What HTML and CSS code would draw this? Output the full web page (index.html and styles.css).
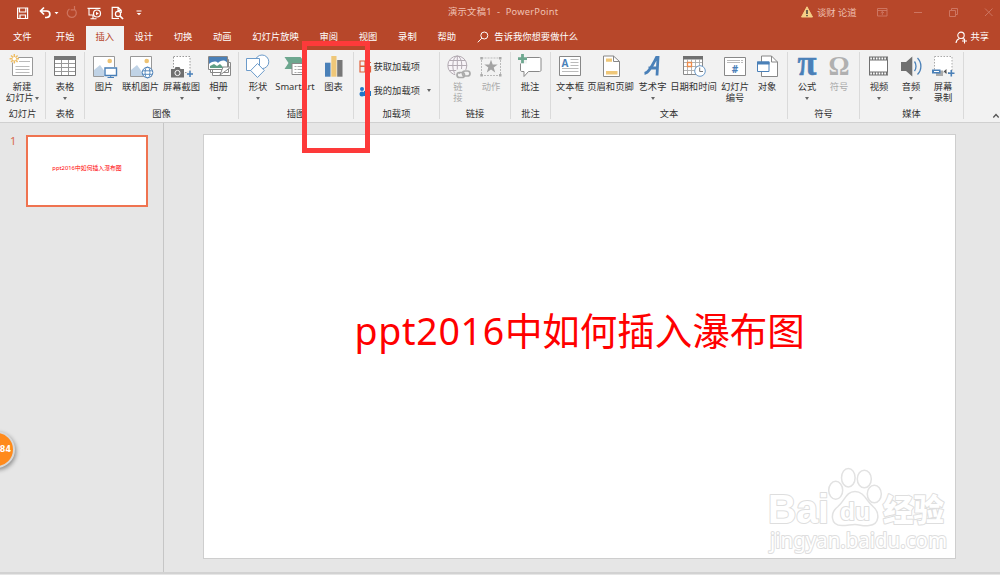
FILE: index.html
```html
<!DOCTYPE html>
<html lang="zh-CN">
<head>
    <meta charset="UTF-8">
    <meta name="viewport" content="width=device-width, initial-scale=1.0">
    <title>演示文稿1 - PowerPoint</title>
    <link rel="stylesheet" href="styles.css">
</head>
<body>
    <div class="app">
        <header class="titlebar">
            <div class="quick">
                <svg width="130" height="16" viewBox="0 0 130 16" fill="none" stroke="#fff" stroke-width="1.2">
                    <!-- save -->
                    <path d="M1.6 3h10v10.5h-10zM3.5 3v4h6.3V3M4 13.500V10h5.500v3.500"/>
                    <!-- undo -->
                    <path d="M28 2.500 24.500 6l3.500 3.500M25 6h5.500c4.500 0 4.500 6.500 0 6.500h-1.500" stroke-width="1.7"/>
                    <path d="M38.500 7h4l-2 2.300z" fill="#fff" stroke="none"/>
                    <!-- redo -->
                    <g stroke="#cf7560"><path d="M58.500 4.300a4.500 4.500 0 1 1-5-.3M58.500 1v3.800h-3.800"/></g>
                    <!-- slide show -->
                    <path d="M71.500 3.400h13M73 3.500v6.500h4.500M77 10v3.500M74.500 13.700h6" stroke-width="1.1"/>
                    <circle cx="81" cy="8.500" r="3.500"/><path d="M80 6.800v3.400l2.800-1.700z" fill="#fff" stroke="none"/>
                    <!-- preview -->
                    <path d="M103 13.500h-6.800V2.300h6l3 3V8M102 2.300v3h3"/>
                    <circle cx="102" cy="9" r="2.600"/><path d="m104 11 3 3" stroke-width="1.700"/>
                    <path d="M120.500 6h5" stroke-width="1"/><path d="M120.800 8h4.400l-2.200 2.300z" fill="#fff" stroke="none"/>
                </svg>
            </div>
            <div class="doc-title">演示文稿1&nbsp; - &nbsp;PowerPoint</div>
            <div class="account">
                <svg width="12" height="12" viewBox="0 0 12 12"><path d="M6 .8 11.500 11H.5z" fill="#f5cf86" stroke="#f5cf86" stroke-linejoin="round"/><path d="M6 4v4M6 9v1.300" stroke="#333" stroke-width="1.400"/></svg>
                <span>谈财 论道</span>
            </div>
            <div class="window-btns">
                <svg width="120" height="12" viewBox="0 0 120 12" fill="none" stroke="#cd7561">
                    <path d="M.5 2.500h9.500v7.500H.5zM.5 4.500h9.500M5.300 9V5.500M3.700 7l1.600-1.500L7 7"/>
                    <path d="M37 6.500h8"/>
                    <path d="M72.500 4.500h6v6h-6zM74.500 4.500v-2h6v6h-2"/>
                    <path d="m108 2.500 7.500 7.500M115.500 2.500 108 10"/>
                </svg>
            </div>
        </header>

        <nav class="tabs">
            <span class="tab file">文件</span>
            <span class="tab">开始</span>
            <span class="tab active">插入</span>
            <span class="tab">设计</span>
            <span class="tab">切换</span>
            <span class="tab">动画</span>
            <span class="tab">幻灯片放映</span>
            <span class="tab">审阅</span>
            <span class="tab">视图</span>
            <span class="tab">录制</span>
            <span class="tab">帮助</span>
            <span class="tell-me">
                <svg width="12" height="12" viewBox="0 0 12 12" fill="none" stroke="#fff"><circle cx="7.300" cy="4.500" r="3.500"/><path d="M4.800 7.200.8 11.300"/></svg>
                告诉我你想要做什么
            </span>
            <span class="share">
                <svg width="13" height="13" viewBox="0 0 13 13" fill="none" stroke="#fff" stroke-width="1.100"><circle cx="6" cy="4.300" r="3.200"/><path d="M1 12c.3-2.500 1.700-4 3.500-4.600M7.500 7.300l1.300.9M9.500 7.500v5M7 10h5"/></svg>
                共享
            </span>
        </nav>

        <section class="ribbon">
            <div class="group g-slide">
                <div class="tools">
                    <div class="tool w44">
                        <svg class="icon" viewBox="0 0 26 24" fill="none">
                            <path d="M3.500 3.500h20v18h-20z" fill="#fff" stroke="#999"/>
                            <path d="M10 7.500h11M6.500 12.500h14M6.500 15.500h14M6.500 18.500h14" stroke="#bbb"/>
                            <circle cx="5.300" cy="4.700" r="4.200" fill="#f2f2f2"/>
                            <path d="M5.300 0v9.400M.6 4.700H10M2 1.400l6.600 6.600M8.600 1.400 2 8" stroke="#efbd62" stroke-width="1.400"/>
                            <circle cx="5.300" cy="4.700" r="1.800" fill="#fff"/>
                        </svg>
                        <span>新建<br>幻灯片 <i class="caret inline"></i></span>
                    </div>
                </div>
                <div class="group-name">幻灯片</div>
            </div>

            <div class="group g-table">
                <div class="tools">
                    <div class="tool w38">
                        <svg class="icon" viewBox="0 0 26 24" fill="none">
                            <path d="M2.500 2.500h21v19h-21z" fill="#fff" stroke="#777"/>
                            <path d="M2 2h22v4H2z" fill="#777"/>
                            <path d="M3 9.500h20M3 13.500h20M3 17.500h20M9.500 6v15M16.500 6v15" stroke="#999"/>
                        </svg>
                        <span>表格</span><i class="caret"></i>
                    </div>
                </div>
                <div class="group-name">表格</div>
            </div>

            <div class="group g-image">
                <div class="tools">
                    <div class="tool w34">
                        <svg class="icon" viewBox="0 0 26 24" fill="none">
                            <path d="M2.500 2.500h21v20h-21z" fill="#fff" stroke="#999"/>
                            <path d="M3 22v-6l6-5 8 11z" fill="#c0d3e6"/>
                            <circle cx="18.700" cy="7" r="2.300" fill="#eec374"/>
                            <path d="M13 13h13v11H13z" fill="#f2f2f2"/>
                            <path d="M14 14h11.500v7.500H14z" fill="#fff" stroke="#4a80b8" stroke-width="1.400"/>
                            <path d="M19.700 21.500v2M16.500 23.500h6.500" stroke="#4a80b8"/>
                        </svg>
                        <span>图片</span>
                    </div>
                    <div class="tool w39">
                        <svg class="icon" viewBox="0 0 26 24" fill="none">
                            <path d="M2.500 2.500h21v20h-21z" fill="#fff" stroke="#999"/>
                            <path d="M3 22v-6l6-5 8 11z" fill="#c0d3e6"/>
                            <circle cx="18.700" cy="7" r="2.300" fill="#eec374"/>
                            <circle cx="19.500" cy="18.500" r="5.300" fill="#fff" stroke="#4a80b8"/>
                            <ellipse cx="19.500" cy="18.500" rx="2.400" ry="5.300" stroke="#4a80b8" stroke-width=".9"/>
                            <path d="M14.500 16.800h10M14.500 20.300h10" stroke="#4a80b8" stroke-width=".9"/>
                        </svg>
                        <span>联机图片</span>
                    </div>
                    <div class="tool w43">
                        <svg class="icon" viewBox="0 0 26 24" fill="none">
                            <path d="M4.500 2.500h16.500v16H4.500z" fill="#fff" stroke="#999" stroke-dasharray="1.500 1.500"/>
                            <path d="M2 15h3.500l1-2h4l1 2H15v8.500H2z" fill="#707070"/>
                            <circle cx="8.500" cy="19" r="2.600" fill="#707070" stroke="#fff"/>
                            <path d="M18 17h6v6h-6z" fill="#f2f2f2"/>
                            <path d="M21 17v6M18 20h6" stroke="#4a80b8" stroke-width="1.500"/>
                        </svg>
                        <span>屏幕截图</span><i class="caret"></i>
                    </div>
                    <div class="tool w31">
                        <svg class="icon" viewBox="0 0 26 24" fill="none">
                            <path d="M6.500 8.500h18v13h-18zM4.500 5.500h18v13h-18z" fill="#fff" stroke="#888"/>
                            <path d="M2.500 2.500h19v13h-19z" fill="#fff" stroke="#888"/>
                            <path d="M3 3h18v5.500c-3-3.500-7-1.500-9 .5-2-2-5-2-9 1z" fill="#4a80b8"/>
                            <path d="M4 14v-2l4-2 3 2 3-2 4 4z" fill="#5f9e86"/>
                            <path d="m14 21 3-8h8z" fill="#fff" stroke="#888"/>
                        </svg>
                        <span>相册</span><i class="caret"></i>
                    </div>
                </div>
                <div class="group-name">图像</div>
            </div>

            <div class="group g-illus">
                <div class="tools">
                    <div class="tool w28">
                        <svg class="icon" viewBox="0 0 26 24" fill="#fff" stroke="#6c9bca">
                            <circle cx="17" cy="7.800" r="6.800"/>
                            <path d="M1.500 4.500h13v12h-13z"/>
                            <path d="m12.500 9.500 6.800 7-6.800 7-6.800-7z"/>
                        </svg>
                        <span>形状</span><i class="caret"></i>
                    </div>
                    <div class="tool w46">
                        <svg class="icon" viewBox="0 0 26 24" fill="none">
                            <path d="M2.500 3h16l5 6-5 6h-16l4-6z" fill="#6da78f"/>
                            <path d="M10 9.500h14v11H10z" fill="#fff" stroke="#888"/>
                            <path d="M12.500 12.500h2m1 0h8M12.500 15.500h2m1 0h8M12.500 18.500h2m1 0h8" stroke="#aaa"/>
                        </svg>
                        <span>SmartArt</span>
                    </div>
                    <div class="tool w31">
                        <svg class="icon" viewBox="0 0 26 24">
                            <path d="M4 8.700h5.500v14H4z" fill="#4a80b8"/>
                            <path d="M10.300 2h5.200v20.700h-5.200z" fill="#efc778"/>
                            <path d="M16.200 6h5.300v16.700h-5.300z" fill="#777"/>
                        </svg>
                        <span>图表</span>
                    </div>
                </div>
                <div class="group-name">插图</div>
            </div>

            <div class="group g-addins">
                <div class="addins">
                    <div class="addin">
                        <svg width="13" height="13" viewBox="0 0 13 13" fill="none" stroke="#e0603a" stroke-width="1.200"><path d="M1 1h5v5H1zM1 6.500h5V12H1zM6 6.500h5.500V12H6zM9.500 0v5M7 2.500h5"/></svg>
                        获取加载项
                    </div>
                    <div class="addin">
                        <svg width="13" height="13" viewBox="0 0 13 13" fill="#1f76c8"><circle cx="8.500" cy="3.500" r="2.500"/><circle cx="3" cy="5" r="2"/><path d="M5 7h7v5H5z"/><circle cx="3" cy="10" r="2.500"/></svg>
                        我的加载项 <i class="caret"></i>
                    </div>
                </div>
                <div class="group-name">加载项</div>
            </div>

            <div class="group g-links">
                <div class="tools">
                    <div class="tool w32 disabled">
                        <svg class="icon" viewBox="0 0 26 24" fill="none" stroke="#b3abb3">
                            <circle cx="12.300" cy="11.500" r="9.500" fill="#f8f4f8"/>
                            <ellipse cx="12.300" cy="11.500" rx="4.500" ry="9.500"/>
                            <path d="M12.300 2v19M3 11.500h19M4.500 6.500h16M4.500 16.500h16"/>
                            <g stroke="#f2f2f2" stroke-width="4"><rect x="12" y="17" width="7" height="5" rx="2.500"/><rect x="18" y="18" width="7" height="5" rx="2.500"/></g>
                            <g stroke="#aaa" stroke-width="1.700"><rect x="12" y="18.500" width="7.500" height="5" rx="2.500"/><rect x="17.500" y="17" width="7.500" height="5" rx="2.500"/></g>
                        </svg>
                        <span>链<br>接</span>
                    </div>
                    <div class="tool w34 disabled">
                        <svg class="icon" viewBox="0 0 26 24" fill="none">
                            <path d="M3.500 4h19v17.500h-19z" stroke="#bbb" stroke-dasharray="2 1"/>
                            <path d="M2.300 3h2.500v2.500H2.300zM21 3h2.500v2.500H21zM2.300 20h2.500v2.500H2.300zM21 20h2.500v2.500H21z" fill="#aaa"/>
                            <path d="m13 5.800 1.700 4.800h5l-4 3 1.500 4.900-4.200-3-4.200 3 1.500-4.900-4-3h5z" fill="#a3a3a3"/>
                        </svg>
                        <span>动作</span>
                    </div>
                </div>
                <div class="group-name">链接</div>
            </div>

            <div class="group g-comment">
                <div class="tools">
                    <div class="tool w38">
                        <svg class="icon" viewBox="0 0 26 24" fill="none">
                            <path d="M5.500 3.500h17c1 0 1.500.5 1.500 1.500v11c0 1-.5 1.500-1.500 1.500h-11l-4.500 5v-5H5c-1 0-1.500-.5-1.500-1.500V5c0-1 .5-1.500 2-1.500z" fill="#fff" stroke="#888"/>
                            <path d="M0 0h10v9.500H0z" fill="#f2f2f2"/>
                            <path d="M5.500 0v9.200M1 4.600h9" stroke="#6da78f" stroke-width="2.800"/>
                        </svg>
                        <span>批注</span>
                    </div>
                </div>
                <div class="group-name">批注</div>
            </div>

            <div class="group g-text">
                <div class="tools">
                    <div class="tool w31">
                        <svg class="icon" viewBox="0 0 26 24" fill="none">
                            <path d="M2.500 2.500h21v19h-21z" fill="#fff" stroke="#888"/>
                            <text x="4.500" y="12.500" class="glyph-a">A</text>
                            <path d="M13.500 5.500h8M13.500 8.500h8M13.500 11.500h8M5 14.500h16.500M5 17.500h16.500" stroke="#bbb"/>
                        </svg>
                        <span>文本框</span><i class="caret"></i>
                    </div>
                    <div class="tool w50">
                        <svg class="icon" viewBox="0 0 26 24" fill="none">
                            <path d="M5.500 2h10l6 5.500v15h-16z" fill="#fff" stroke="#888"/>
                            <path d="M15.500 2v5.500h6" stroke="#888"/>
                            <path d="M8 4.500h6v3.300H8zM8 17h11.500v3.500H8z" fill="#efc778"/>
                        </svg>
                        <span>页眉和页脚</span>
                    </div>
                    <div class="tool w34">
                        <svg class="icon" viewBox="0 0 26 24" fill="none">
                            <path d="M4.500 19.500C9 19 13 10 16.500 3.500h1.500l-1 18M8.500 14H18" stroke="#4a80b8" stroke-width="2.800"/>
                        </svg>
                        <span>艺术字</span><i class="caret"></i>
                    </div>
                    <div class="tool w48">
                        <svg class="icon" viewBox="0 0 26 24" fill="none">
                            <path d="M2.500 2.500h19v18h-19z" fill="#fff" stroke="#888"/>
                            <path d="M2 2h20v3.500H2z" fill="#707070"/>
                            <path d="M3 8.500h18M3 12.500h18M3 16.500h18M6.500 5v15M10.500 5v15M14.500 5v15M18.500 5v15" stroke="#aaa" stroke-width=".9"/>
                            <path d="M6.500 8.500h4v4h-4z" stroke="#ed8b4a" stroke-width="1.300" fill="#fff"/>
                            <circle cx="19" cy="17" r="5.300" fill="#fff" stroke="#6c9bca"/>
                            <path d="M18.700 13.500v4H22" stroke="#777"/>
                        </svg>
                        <span>日期和时间</span>
                    </div>
                    <div class="tool w35">
                        <svg class="icon" viewBox="0 0 26 24" fill="none">
                            <path d="M2.500 3.500h21v18h-21z" fill="#fff" stroke="#888"/>
                            <path d="M5 6.500h16M5 8.500h16" stroke="#bbb" stroke-dasharray="13 1"/>
                            <text x="13" y="19" class="glyph-hash">#</text>
                        </svg>
                        <span>幻灯片<br>编号</span>
                    </div>
                    <div class="tool w29">
                        <svg class="icon" viewBox="0 0 26 24" fill="none">
                            <path d="M7.500 2h10l6 6v14.500h-16z" fill="#fff" stroke="#888"/>
                            <path d="M17.500 2v6h6" stroke="#888"/>
                            <path d="M3.500 8h11.500v9.500H3.500z" fill="#fff" stroke="#4a80b8"/>
                            <path d="M3 7.500h12.500v3H3z" fill="#4a80b8"/>
                        </svg>
                        <span>对象</span>
                    </div>
                </div>
                <div class="group-name">文本</div>
            </div>

            <div class="group g-symbol">
                <div class="tools">
                    <div class="tool w32">
                        <svg class="icon" viewBox="0 0 26 24"><text x="13" y="21" class="glyph-pi" textLength="19" lengthAdjust="spacingAndGlyphs">π</text></svg>
                        <span>公式</span><i class="caret"></i>
                    </div>
                    <div class="tool w32 disabled">
                        <svg class="icon" viewBox="0 0 26 24"><text x="13" y="21" class="glyph-omega" textLength="21" lengthAdjust="spacingAndGlyphs">Ω</text></svg>
                        <span>符号</span>
                    </div>
                </div>
                <div class="group-name">符号</div>
            </div>

            <div class="group g-media">
                <div class="tools">
                    <div class="tool w32">
                        <svg class="icon" viewBox="0 0 26 24" fill="none">
                            <path d="M3 2.500h19v19H3z" fill="#707070"/>
                            <path d="M4 6.500h17v11H4z" fill="#fff"/>
                            <path d="M4.300 4.500h17M4.300 19.500h17" stroke="#fff" stroke-width="1.800" stroke-dasharray="1.600 1.200"/>
                        </svg>
                        <span>视频</span><i class="caret"></i>
                    </div>
                    <div class="tool w32">
                        <svg class="icon" viewBox="0 0 26 24" fill="none">
                            <path d="M3 8h5L14.300 2.500v20L8 17H3z" fill="#707070"/>
                            <path d="M16.500 7.500c2 2.500 2 7 0 9.500M19.500 4c4.500 4.500 4.500 12 0 16.500" stroke="#4a80b8" stroke-width="1.300"/>
                        </svg>
                        <span>音频</span><i class="caret"></i>
                    </div>
                    <div class="tool w32">
                        <svg class="icon" viewBox="0 0 26 24" fill="none">
                            <path d="M4.500 2.500h17.500v16H4.500z" fill="#fff" stroke="#aaa" stroke-dasharray="1.500 1.500"/>
                            <path d="M6 16.500h7v5.500H6z" fill="#aaa"/>
                            <path d="M2 15.500h8.500v4H2z" fill="#4a80b8"/><path d="M4 17.500h5" stroke="#fff"/>
                            <path d="m16.500 15v5l-3-2.500z" fill="#555"/>
                            <path d="M21.300 16v6.500M18 19.300h6.500" stroke="#4a80b8" stroke-width="1.600"/>
                        </svg>
                        <span>屏幕<br>录制</span>
                    </div>
                </div>
                <div class="group-name">媒体</div>
            </div>
            <svg class="collapse" width="8" height="6" viewBox="0 0 8 6" fill="none" stroke="#555" stroke-width="1.300"><path d="m1.300 4.500 2.700-3 2.700 3"/></svg>
        </section>

        <main class="workspace">
            <aside class="thumbs">
                <span class="num">1</span>
                <div class="thumb">ppt2016中如何插入瀑布图</div>
            </aside>
            <div class="stage">
                <div class="slide">
                    <h1><span>ppt2016</span>中如何插入瀑布图</h1>
                    <svg class="watermark" width="190" height="92" viewBox="0 0 190 92">
                        <g fill="#fff" stroke="#e2e2e2" stroke-width="1.500">
                            <ellipse cx="72.700" cy="24.300" rx="7" ry="9"/>
                            <ellipse cx="85.300" cy="11.700" rx="6.800" ry="9.300"/>
                            <ellipse cx="101.300" cy="13" rx="7" ry="8.800"/>
                            <ellipse cx="111.300" cy="28" rx="7" ry="8.800"/>
                            <path d="M92 25.500c-9 0-10 9-17 15-8 6-8 19 4 19 6 0 8-1 13-1s8 2 14 1c11-1 11-13 4-19-7-6-9-15-18-15z"/>
                        </g>
                        <text class="wm wm-bai" x="5" y="57" textLength="61" lengthAdjust="spacingAndGlyphs">Bai</text>
                        <text class="wm wm-du" x="77" y="53.500" textLength="30" lengthAdjust="spacingAndGlyphs">du</text>
                        <text class="wm wm-cn" x="120" y="55" textLength="61" lengthAdjust="spacingAndGlyphs">经验</text>
                        <text class="wm wm-url" x="7" y="82" textLength="177" lengthAdjust="spacingAndGlyphs">jingyan.baidu.com</text>
                    </svg>
                </div>
            </div>
        </main>
        <div class="statusbar"></div>

        <div class="badge">84</div>
        <div class="highlight"></div>
    </div>
</body>
</html>
```
FILE: styles.css
```css
body {
    margin: 0;
    font-family: "Noto Sans", "Noto Sans CJK SC", sans-serif;
    font-size: 9.3px;
    color: #333;
    background-color: #e6e6e6;
}
.app {
    position: relative;
    width: 1000px;
    height: 575px;
    overflow: hidden;
    display: flex;
    flex-direction: column;
}
svg {
    display: block;
    flex: none;
}

/* title bar */
.titlebar {
    display: flex;
    align-items: center;
    height: 26px;
    background-color: #b7472a;
    color: #f0c1b3;
}
.quick {
    width: 432px;
    padding-left: 16px;
}
.doc-title {
    width: 353px;
    height: 26px;
    line-height: 24px;
    letter-spacing: 0.250px;
    white-space: nowrap;
}
.account {
    display: flex;
    align-items: center;
    gap: 4px;
    width: 76px;
    height: 24px;
    align-self: flex-start;
    white-space: nowrap;
}
.window-btns {
    height: 14px;
}

/* tabs */
.tabs {
    display: flex;
    height: 24px;
    line-height: 22px;
    background-color: #b7472a;
    color: #fff;
    white-space: nowrap;
}
.tab {
    padding: 0 10.35px;
}
.tab.file {
    margin: 0 3.500px 0 2.700px;
}
.tab.active {
    margin-left: 1.300px;
    padding: 0 10.100px 0 9.300px;
    background-color: #f2f2f2;
    color: #b7472a;
}
.tell-me {
    display: flex;
    align-items: center;
    gap: 5px;
    height: 22px;
    margin-left: 11px;
}
.share {
    display: flex;
    align-items: center;
    gap: 2px;
    height: 22px;
    margin: 0 11px 0 auto;
}

/* ribbon */
.ribbon {
    display: flex;
    height: 72px;
    background-color: #f2f2f2;
    border-bottom: 1px solid #d0d0d0;
}
.group {
    box-sizing: border-box;
    display: flex;
    flex-direction: column;
    justify-content: space-between;
    height: 67px;
    margin-top: 2px;
    border-right: 1px solid #dadada;
}
.g-slide { width: 46px; }
.g-table { width: 39px; }
.g-image { width: 154px; }
.g-illus { width: 115px; }
.g-addins { width: 86px; }
.g-links { width: 71px; }
.g-comment { width: 40px; }
.g-text { width: 237px; }
.g-symbol { width: 72px; }
.g-media { width: 104px; }

.tools {
    display: flex;
    padding-top: 2px;
}
.g-image .tools { padding-left: 2px; }
.g-illus .tools { padding-left: 5px; }
.g-links .tools { padding-left: 2px; }
.g-text .tools { padding-left: 3.500px; }
.g-symbol .tools,
.g-media .tools { padding-left: 3px; }

.tool {
    display: flex;
    flex-direction: column;
    align-items: center;
    flex: none;
    line-height: 11.500px;
    text-align: center;
    white-space: nowrap;
}
.tool.disabled {
    color: #ababab;
}
.icon {
    width: 26px;
    height: 24px;
    margin-bottom: 2.500px;
    overflow: visible;
}
.w28 { width: 28px; }
.w29 { width: 29px; }
.w31 { width: 31px; }
.w32 { width: 32px; }
.w34 { width: 34px; }
.w35 { width: 35px; }
.w38 { width: 38px; }
.w39 { width: 39px; }
.w43 { width: 43px; }
.w44 { width: 44px; }
.w46 { width: 46px; }
.w48 { width: 48px; }
.w50 { width: 50px; }

.caret {
    width: 0;
    height: 0;
    margin-top: 4.500px;
    border: 2.500px solid transparent;
    border-width: 3px 2.500px 0;
    border-top-color: #666;
}
.caret.inline {
    display: inline-block;
    margin: 0 -1px 0 -1px;
    vertical-align: 1px;
}
.group-name {
    height: 11px;
    line-height: 11px;
    text-align: center;
}
.addins {
    display: flex;
    flex-direction: column;
    padding: 2px 0 0 4.500px;
}
.addin {
    display: flex;
    align-items: center;
    gap: 2px;
    height: 24px;
    white-space: nowrap;
}
.addin .caret {
    margin: 0 0 0 5px;
}
.collapse {
    margin: 63px 0 0 28px;
}

.glyph-a,
.glyph-hash {
    font: bold 10px "Open Sans", sans-serif;
    fill: #4a80b8;
}
.glyph-hash,
.glyph-pi,
.glyph-omega {
    text-anchor: middle;
}
.glyph-pi {
    font: bold 36px/1 "Liberation Serif", serif;
    fill: #4a80b8;
    stroke: #4a80b8;
    stroke-width: 0.500px;
}
.glyph-omega {
    font: bold 27px/1 "Liberation Serif", serif;
    fill: #b0b0b0;
}

/* work area */
.workspace {
    display: flex;
    flex: 1;
}
.thumbs {
    box-sizing: border-box;
    display: flex;
    align-items: flex-start;
    width: 164px;
    padding: 12px 0 0 10px;
    border-right: 1px solid #c6c6c6;
}
.num {
    width: 16px;
    font-size: 11px;
    line-height: 12px;
    color: #d9694d;
}
.thumb {
    box-sizing: border-box;
    width: 122px;
    height: 72px;
    border: 2px solid #ef7350;
    background-color: #fff;
    color: #f00;
    font-size: 5.850px;
    line-height: 62px;
    text-align: center;
    white-space: nowrap;
}
.stage {
    padding: 11px 0 0 39px;
}
.slide {
    position: relative;
    box-sizing: border-box;
    width: 753px;
    height: 425px;
    border: 1px solid #cecece;
    background-color: #fff;
}
.slide h1 {
    margin: 168px 0 0 150.500px;
    font-size: 37.500px;
    font-weight: 400;
    line-height: 56px;
    color: #f00;
    white-space: nowrap;
}
.slide h1 span {
    letter-spacing: 0.700px;
}
.watermark {
    position: absolute;
    right: 2px;
    bottom: 0;
}
.wm {
    fill: #fff;
    stroke: #dedede;
    stroke-width: 2px;
    paint-order: stroke;
    stroke-linejoin: round;
}
.wm-bai {
    font: bold 40px "Liberation Sans", sans-serif;
}
.wm-du {
    font: bold 24px "Liberation Sans", sans-serif;
}
.wm-cn {
    font: 900 31px "Noto Sans CJK SC", sans-serif;
}
.wm-url {
    font: 21px "Noto Sans", sans-serif;
}
.statusbar {
    height: 1px;
    border-top: 2px solid #d2d2d2;
    background-color: #e6e6e6;
}

/* floating items over the window */
.badge {
    position: absolute;
    left: -22px;
    top: 431px;
    box-sizing: border-box;
    width: 37px;
    height: 37px;
    padding-right: 2px;
    border: 2px solid #d8d8d8;
    border-radius: 50%;
    background-color: #ff8a1c;
    box-shadow: 1px 2px 4px rgba(0, 0, 0, 0.4);
    color: #fff;
    font: bold 8px/33px "DejaVu Sans", sans-serif;
    text-align: right;
}
.highlight {
    position: absolute;
    left: 302px;
    top: 41px;
    box-sizing: border-box;
    width: 68px;
    height: 112px;
    border: 5px solid #fd3a3a;
}
```
